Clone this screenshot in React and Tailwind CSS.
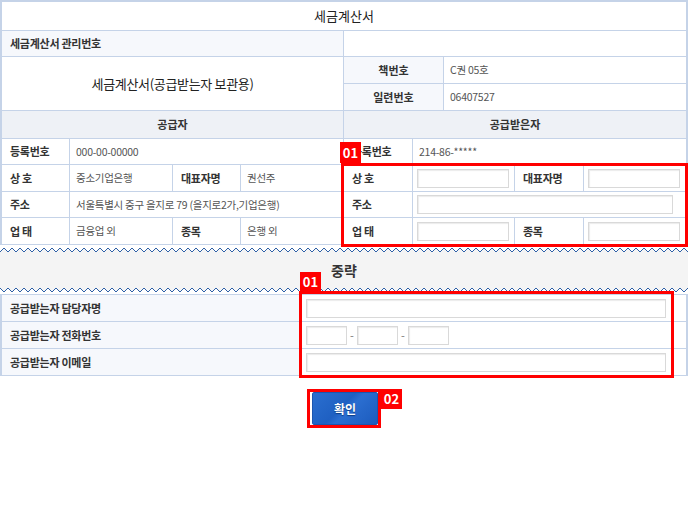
import React from "react";

const font = { fontFamily: '"Noto Sans CJK KR", "Noto Sans", sans-serif' };

function Input({ w }) {
  return (
    <div
      className="h-[19px] bg-white border border-[#d9d9d9] shadow-[inset_1px_1px_1px_#ececec]"
      style={{ width: w }}
    />
  );
}

function Zig({ top }) {
  const id = top ? "zt" : "zb";
  return (
    <svg width="688" height="7" className="block">
      <defs>
        <pattern id={id} width="8" height="7" patternUnits="userSpaceOnUse">
          {top ? (
            <>
              <polygon points="0,7 0,5 4,1 8,5 8,7" fill="#f4f4f4" />
              <polyline points="0,5 4,1 8,5" fill="none" stroke="#2d5fa6" strokeWidth="1" />
            </>
          ) : (
            <>
              <polygon points="0,0 0,2 4,6 8,2 8,0" fill="#f4f4f4" />
              <polyline points="0,2 4,6 8,2" fill="none" stroke="#2d5fa6" strokeWidth="1" />
            </>
          )}
        </pattern>
      </defs>
      <rect width="688" height="7" fill={`url(#${id})`} />
    </svg>
  );
}

const L = "flex items-center pl-[8px] font-bold text-[11px] text-[#333] tracking-tight";
const V = "flex items-center pl-[6px] text-[10.5px] text-[#555] tracking-tight";

export default function App() {
  return (
    <div className="w-[688px] h-[517px] bg-white relative" style={font}>
      {/* Section 1 */}
      <div className="w-[688px] border-2 border-b-0 border-[#c5d3e8]">
        <div className="h-[29px] border-b border-[#c5d3e8] flex items-center justify-center text-[13px] text-[#222]">
          세금계산서
        </div>
        <div className="h-[26px] border-b border-[#c5d3e8] flex">
          <div className={"w-[342px] border-r border-[#c5d3e8] bg-[#f6f8fc] " + L}>세금계산서 관리번호</div>
          <div className="flex-1" />
        </div>
        <div className="h-[54px] border-b border-[#c5d3e8] flex">
          <div className="w-[342px] border-r border-[#c5d3e8] flex items-center justify-center text-[13px] text-[#222] tracking-tight">
            세금계산서(공급받는자 보관용)
          </div>
          <div className="flex-1 flex flex-col">
            <div className="h-[27px] border-b border-[#c5d3e8] flex">
              <div className="w-[100px] border-r border-[#c5d3e8] bg-[#f6f8fc] flex items-center justify-center font-bold text-[11px] text-[#333]">책번호</div>
              <div className={V + " flex-1"}>C권 05호</div>
            </div>
            <div className="flex-1 flex">
              <div className="w-[100px] border-r border-[#c5d3e8] bg-[#f6f8fc] flex items-center justify-center font-bold text-[11px] text-[#333]">일련번호</div>
              <div className={V + " flex-1"}>06407527</div>
            </div>
          </div>
        </div>
        <div className="h-[28px] border-b border-[#c5d3e8] flex bg-[#eef1f6]">
          <div className="w-[342px] border-r border-[#c5d3e8] flex items-center justify-center font-bold text-[11px] text-[#333]">공급자</div>
          <div className="flex-1 flex items-center justify-center font-bold text-[11px] text-[#333]">공급받은자</div>
        </div>
        {/* 등록번호 */}
        <div className="h-[26px] border-b border-[#c5d3e8] flex">
          <div className="w-[342px] border-r border-[#c5d3e8] flex">
            <div className={"w-[68px] border-r border-[#c5d3e8] " + L}>등록번호</div>
            <div className={V + " flex-1"}>000-00-00000</div>
          </div>
          <div className="flex-1 flex">
            <div className={"w-[69px] border-r border-[#c5d3e8] " + L}>등록번호</div>
            <div className={V + " flex-1"}>214-86-*****</div>
          </div>
        </div>
        {/* 상호 */}
        <div className="h-[27px] border-b border-[#c5d3e8] flex">
          <div className="w-[342px] border-r border-[#c5d3e8] flex">
            <div className={"w-[68px] border-r border-[#c5d3e8] " + L}>상 호</div>
            <div className={"w-[103px] border-r border-[#c5d3e8] " + V}>중소기업은행</div>
            <div className={"w-[68px] border-r border-[#c5d3e8] " + L}>대표자명</div>
            <div className={V + " flex-1"}>권선주</div>
          </div>
          <div className="flex-1 flex">
            <div className={"w-[69px] border-r border-[#c5d3e8] " + L}>상 호</div>
            <div className="w-[102px] border-r border-[#c5d3e8] flex items-center pl-[4px]"><Input w={92} /></div>
            <div className={"w-[69px] border-r border-[#c5d3e8] " + L}>대표자명</div>
            <div className="flex-1 flex items-center pl-[4px]"><Input w={92} /></div>
          </div>
        </div>
        {/* 주소 */}
        <div className="h-[26px] border-b border-[#c5d3e8] flex">
          <div className="w-[342px] border-r border-[#c5d3e8] flex">
            <div className={"w-[68px] border-r border-[#c5d3e8] " + L}>주소</div>
            <div className={V + " flex-1"}>서울특별시 중구 을지로 79 (을지로2가,기업은행)</div>
          </div>
          <div className="flex-1 flex">
            <div className={"w-[69px] border-r border-[#c5d3e8] " + L}>주소</div>
            <div className="flex-1 flex items-center pl-[4px]"><Input w={256} /></div>
          </div>
        </div>
        {/* 업태 */}
        <div className="h-[27px] border-b border-[#c5d3e8] flex">
          <div className="w-[342px] border-r border-[#c5d3e8] flex">
            <div className={"w-[68px] border-r border-[#c5d3e8] " + L}>업 태</div>
            <div className={"w-[103px] border-r border-[#c5d3e8] " + V}>금융업 외</div>
            <div className={"w-[68px] border-r border-[#c5d3e8] " + L}>종목</div>
            <div className={V + " flex-1"}>은행 외</div>
          </div>
          <div className="flex-1 flex">
            <div className={"w-[69px] border-r border-[#c5d3e8] " + L}>업 태</div>
            <div className="w-[102px] border-r border-[#c5d3e8] flex items-center pl-[4px]"><Input w={92} /></div>
            <div className={"w-[69px] border-r border-[#c5d3e8] " + L}>종목</div>
            <div className="flex-1 flex items-center pl-[4px]"><Input w={92} /></div>
          </div>
        </div>
      </div>

      {/* 중략 */}
      <div className="mt-[2px]">
        <Zig top />
        <div className="h-[32px] bg-[#f4f4f4] flex items-center justify-center text-[14px] font-bold text-[#333]">
          중략
        </div>
        <Zig top={false} />
      </div>

      {/* Section 2 */}
      <div className="mt-[1px] w-[688px] border border-x-2 border-[#c5d3e8]">
        <div className="h-[27px] border-b border-[#c5d3e8] flex">
          <div className={"w-[298px] border-r border-[#c5d3e8] bg-[#f6f8fc] " + L}>공급받는자 담당자명</div>
          <div className="flex-1 flex items-center pl-[6px]"><Input w={360} /></div>
        </div>
        <div className="h-[27px] border-b border-[#c5d3e8] flex">
          <div className={"w-[298px] border-r border-[#c5d3e8] bg-[#f6f8fc] " + L}>공급받는자 전화번호</div>
          <div className="flex-1 flex items-center pl-[6px] gap-[2px] text-[11px] text-[#777]">
            <Input w={41} />
            <span className="w-[6px] text-center">-</span>
            <Input w={41} />
            <span className="w-[6px] text-center">-</span>
            <Input w={41} />
          </div>
        </div>
        <div className="h-[26px] flex">
          <div className={"w-[298px] border-r border-[#c5d3e8] bg-[#f6f8fc] " + L}>공급받는자 이메일</div>
          <div className="flex-1 flex items-center pl-[6px]"><Input w={360} /></div>
        </div>
      </div>

      {/* Button */}
      <div className="flex justify-center mt-[13px]">
        <div className="relative w-[74px] h-[39px] border-[3px] border-[#ff0000] pl-[2px]">
          <button
            className="w-[66px] h-[33px] rounded-[2px] text-white font-bold text-[12px] border border-[#1a56b0] [text-shadow:0_1px_1px_#0b3a80]"
            style={{
              background:
                "linear-gradient(135deg, #2a6fd0 0%, #1f60c2 45%, #2b6ed0 55%, #1c5bbd 100%)",
            }}
          >
            확인
          </button>
          <div className="absolute left-[71px] -top-[3px] w-[21px] h-[20px] bg-[#ff0000] text-white font-bold text-[13px] flex items-center justify-center">
            02
          </div>
        </div>
      </div>

      {/* annotations */}
      <div className="absolute left-[341px] top-[163px] w-[347px] h-[84px] border-[3px] border-[#ff0000]" />
      <div className="absolute left-[340px] top-[142px] w-[21px] h-[21px] bg-[#ff0000] text-white font-bold text-[13px] flex items-center justify-center">
        01
      </div>
      <div className="absolute left-[299px] top-[291px] w-[375px] h-[87px] border-[3px] border-[#ff0000]" />
      <div className="absolute left-[300px] top-[272px] w-[21px] h-[20px] bg-[#ff0000] text-white font-bold text-[13px] flex items-center justify-center">
        01
      </div>
    </div>
  );
}
